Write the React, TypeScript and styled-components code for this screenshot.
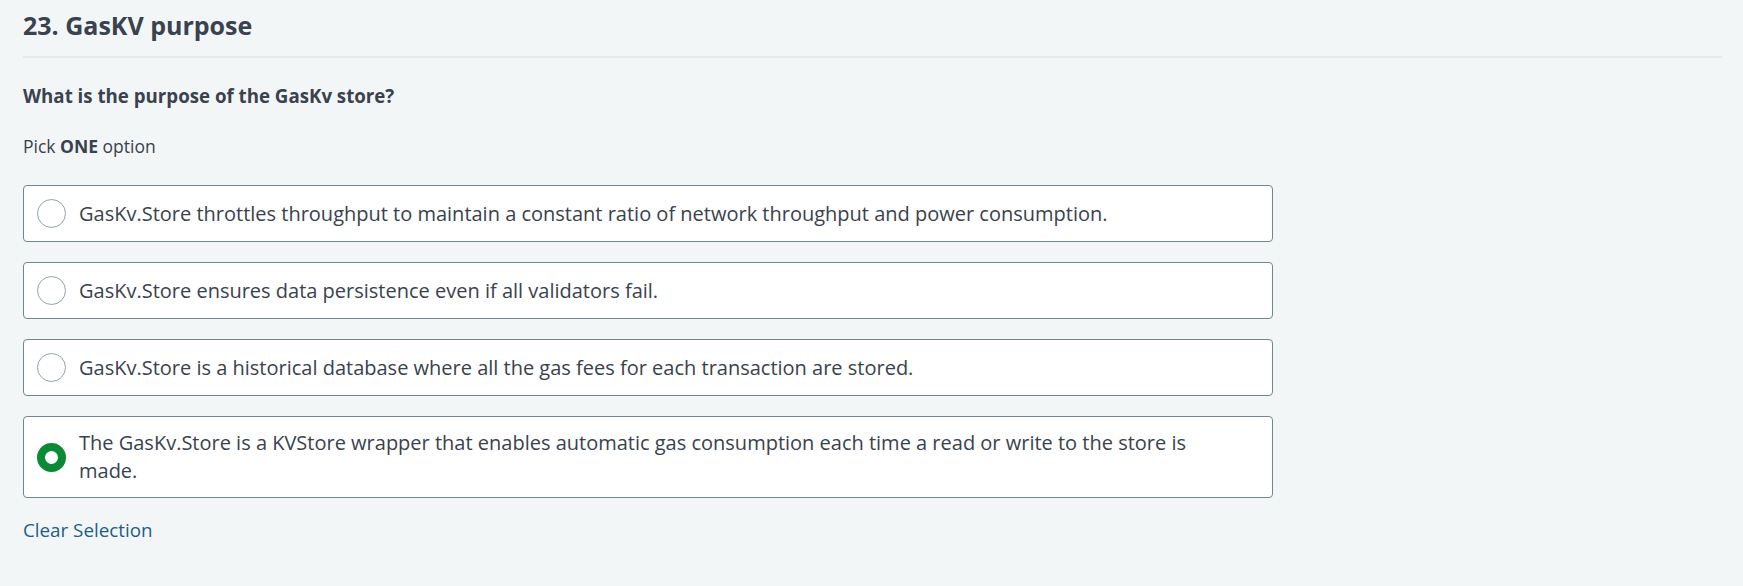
import React, { useState } from "react";
import styled, { createGlobalStyle } from "styled-components";

const GlobalStyle = createGlobalStyle`
  html, body {
    margin: 0;
    padding: 0;
    background: #f3f6f7;
  }
  body {
    font-family: "Open Sans", "Noto Sans", "Liberation Sans", sans-serif;
    color: #39424e;
  }
`;

const Page = styled.main`
  min-height: 586px;
  box-sizing: border-box;
  padding: 9px 21px 0 23px;
  background: #f3f6f7;
`;

const Header = styled.header`
  padding-bottom: 15px;
  border-bottom: 2px solid #e5eaec;
`;

const Title = styled.h2`
  margin: 0;
  font-size: 25px;
  line-height: 32px;
  font-weight: 700;
  color: #39424e;
`;

const Question = styled.p`
  margin: 26px 0 0;
  font-size: 18.7px;
  line-height: 24px;
  font-weight: 700;
  color: #39424e;
`;

const Hint = styled.p`
  margin: 27px 0 0;
  font-size: 17.5px;
  line-height: 22px;
  color: #39424e;

  strong {
    font-weight: 700;
  }
`;

const Options = styled.div`
  display: flex;
  flex-direction: column;
  gap: 20px;
  width: 1250px;
  margin-top: 28px;
`;

const Option = styled.label`
  display: flex;
  align-items: center;
  gap: 13px;
  box-sizing: border-box;
  min-height: 57px;
  padding: 12px 13px;
  background: #ffffff;
  border: 1px solid #71878f;
  border-radius: 4px;
  cursor: pointer;
`;

const Radio = styled.span<{ $checked: boolean }>`
  flex: 0 0 auto;
  box-sizing: border-box;
  width: 29px;
  height: 29px;
  border-radius: 50%;
  background: #ffffff;
  border: ${(p) => (p.$checked ? "8px solid #0b8a35" : "1px solid #8fa3aa")};
`;

const OptionText = styled.span`
  flex: 1 1 auto;
  font-size: 20px;
  line-height: 28px;
  color: #39424e;
  padding-right: 60px;
`;

const ClearButton = styled.button`
  display: block;
  margin: 20px 0 0;
  padding: 0;
  border: none;
  background: none;
  font-family: inherit;
  font-size: 18.8px;
  line-height: 24px;
  color: #1c5d89;
  cursor: pointer;
`;

const options = [
  "GasKv.Store throttles throughput to maintain a constant ratio of network throughput and power consumption.",
  "GasKv.Store ensures data persistence even if all validators fail.",
  "GasKv.Store is a historical database where all the gas fees for each transaction are stored.",
  "The GasKv.Store is a KVStore wrapper that enables automatic gas consumption each time a read or write to the store is made.",
];

export default function App() {
  const [selected, setSelected] = useState<number | null>(3);
  return (
    <>
      <GlobalStyle />
      <Page>
        <Header>
          <Title>23. GasKV purpose</Title>
        </Header>
        <Question>What is the purpose of the GasKv store?</Question>
        <Hint>
          Pick <strong>ONE</strong> option
        </Hint>
        <Options>
          {options.map((text, i) => (
            <Option key={i} onClick={() => setSelected(i)}>
              <Radio $checked={selected === i} />
              <OptionText>{text}</OptionText>
            </Option>
          ))}
        </Options>
        <ClearButton onClick={() => setSelected(null)}>Clear Selection</ClearButton>
      </Page>
    </>
  );
}
